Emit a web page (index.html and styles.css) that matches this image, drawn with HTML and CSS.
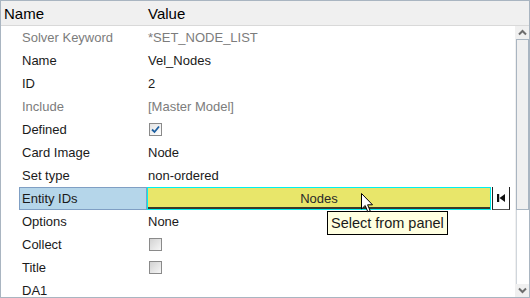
FILE: index.html
```html
<!DOCTYPE html>
<html lang="en">
<head>
    <meta charset="UTF-8">
    <title>Entity Editor</title>
    <link rel="stylesheet" href="styles.css">
</head>
<body>

    <div class="window">
        <div class="header">
            <div class="head-name">Name</div>
            <div class="head-value">Value</div>
        </div>

        <div class="content">
            <div class="rows">
                <div class="row muted"><span class="label">Solver Keyword</span><span class="value">*SET_NODE_LIST</span></div>
                <div class="row"><span class="label">Name</span><span class="value">Vel_Nodes</span></div>
                <div class="row"><span class="label">ID</span><span class="value">2</span></div>
                <div class="row muted"><span class="label">Include</span><span class="value">[Master Model]</span></div>
                <div class="row"><span class="label">Defined</span><span class="value"><span class="checkbox checked">
                    <svg width="11" height="11" viewBox="0 0 11 11"><path d="M2 5.5 L4.5 8 L9 2.5" fill="none" stroke="#1d5fa0" stroke-width="1.8"/></svg>
                </span></span></div>
                <div class="row"><span class="label">Card Image</span><span class="value">Node</span></div>
                <div class="row"><span class="label">Set type</span><span class="value">non-ordered</span></div>
                <div class="row selected">
                    <span class="label-cell">Entity IDs</span>
                    <span class="entity-field">Nodes</span>
                    <span class="panel-btn">
                        <svg width="10" height="10" viewBox="0 0 10 10"><rect x="1" y="1" width="2.2" height="8" fill="#111"/><path d="M9 1 L3.5 5 L9 9 Z" fill="#111"/></svg>
                    </span>
                </div>
                <div class="row"><span class="label">Options</span><span class="value">None</span></div>
                <div class="row"><span class="label">Collect</span><span class="value"><span class="checkbox"></span></span></div>
                <div class="row"><span class="label">Title</span><span class="value"><span class="checkbox"></span></span></div>
                <div class="row"><span class="label">DA1</span><span class="value"></span></div>
            </div>

            <div class="scrollbar">
                <div class="scroll-btn">
                    <svg width="9" height="7" viewBox="0 0 9 7"><path d="M1 5.5 L4.5 2 L8 5.5" fill="none" stroke="#6d6d6d" stroke-width="2"/></svg>
                </div>
                <div class="thumb"></div>
                <div class="track"></div>
                <div class="scroll-btn">
                    <svg width="9" height="7" viewBox="0 0 9 7"><path d="M1 1.5 L4.5 5 L8 1.5" fill="none" stroke="#6d6d6d" stroke-width="2"/></svg>
                </div>
            </div>
        </div>

        <div class="tooltip">Select from panel</div>
        <svg class="cursor" width="14" height="21" viewBox="0 0 14 21">
            <path d="M0.5 0.5 L0.5 16 L4.2 12.5 L6.8 18.8 L9.2 17.8 L6.6 11.8 L11.5 11.8 Z" fill="#fff" stroke="#000" stroke-width="1"/>
        </svg>
    </div>

</body>
</html>
```

FILE: styles.css
```css
/* General page */
body {
    margin: 0;
    padding: 0;
    background-color: #fff;
    font-family: "Liberation Sans", Arial, sans-serif;
}

/* Outer frame */
.window {
    position: relative;
    width: 530px;
    height: 298px;
    box-sizing: border-box;
    border: 1px solid #a9b5c1;
    display: flex;
    flex-direction: column;
    overflow: hidden;
}

/* Column header */
.header {
    height: 24px;
    flex-shrink: 0;
    display: flex;
    align-items: center;
    background-color: #f0f0f0;
    border-bottom: 1px solid #d9d9d9;
    font-size: 15px;
    color: #000;
}

.head-name {
    width: 144px;
    padding-left: 3px;
}

/* Property rows */
.content {
    flex: 1;
    display: flex;
    min-height: 0;
}

.rows {
    flex: 1;
}

.row {
    height: 23px;
    display: flex;
    align-items: center;
    font-size: 13px;
    color: #1a1a1a;
}

.row.muted {
    color: #7c7c7c;
}

.label {
    width: 126px;
    padding-left: 21px;
}

.value {
    display: flex;
    align-items: center;
}

/* Checkboxes */
.checkbox {
    width: 11px;
    height: 11px;
    margin-left: 1px;
    border: 1px solid #8a8a8a;
    background: linear-gradient(135deg, #d2d2d2, #f6f6f6);
    display: flex;
    align-items: center;
    justify-content: center;
}

.checkbox.checked {
    background: linear-gradient(135deg, #e4e4e4, #ffffff);
}

/* Selected entity row */
.row.selected {
    align-items: stretch;
}

.label-cell {
    margin-left: 18px;
    width: 124px;
    padding-left: 2px;
    background-color: #b5d6ea;
    border: 1px solid #7f9fc4;
    display: flex;
    align-items: center;
    color: #1a1a1a;
}

.entity-field {
    width: 342px;
    background-color: #e8e66a;
    border: 1px solid #00f0f0;
    box-shadow: inset 0 -2px 0 #3a3a2a;
    display: flex;
    align-items: center;
    justify-content: center;
    color: #2a2a2a;
}

.panel-btn {
    width: 16px;
    margin-left: 1px;
    background-color: #fff;
    border-left: 1px solid #222;
    border-right: 1px solid #222;
    border-bottom: 1px solid #555;
    display: flex;
    align-items: center;
    justify-content: center;
}

/* Scrollbar */
.scrollbar {
    width: 14px;
    display: flex;
    flex-direction: column;
    align-items: center;
    background-color: #f0f0f0;
}

.scroll-btn {
    width: 14px;
    height: 13px;
    display: flex;
    align-items: center;
    justify-content: center;
    background-color: #f0f0f0;
}

.thumb {
    width: 11px;
    height: 169px;
    border: 1px solid #a9b5c1;
    background-color: #f0f0f0;
}

.track {
    flex: 1;
    width: 12px;
    border-left: 1px solid #d0d6dc;
    background-color: #fff;
}

/* Tooltip and pointer */
.tooltip {
    position: absolute;
    left: 326px;
    top: 210px;
    height: 22px;
    padding: 0 3px;
    display: flex;
    align-items: center;
    background-color: #ffffe1;
    border: 1px solid #000;
    font-size: 14.5px;
    color: #1a1a1a;
}

.cursor {
    position: absolute;
    left: 360px;
    top: 192px;
}
```
